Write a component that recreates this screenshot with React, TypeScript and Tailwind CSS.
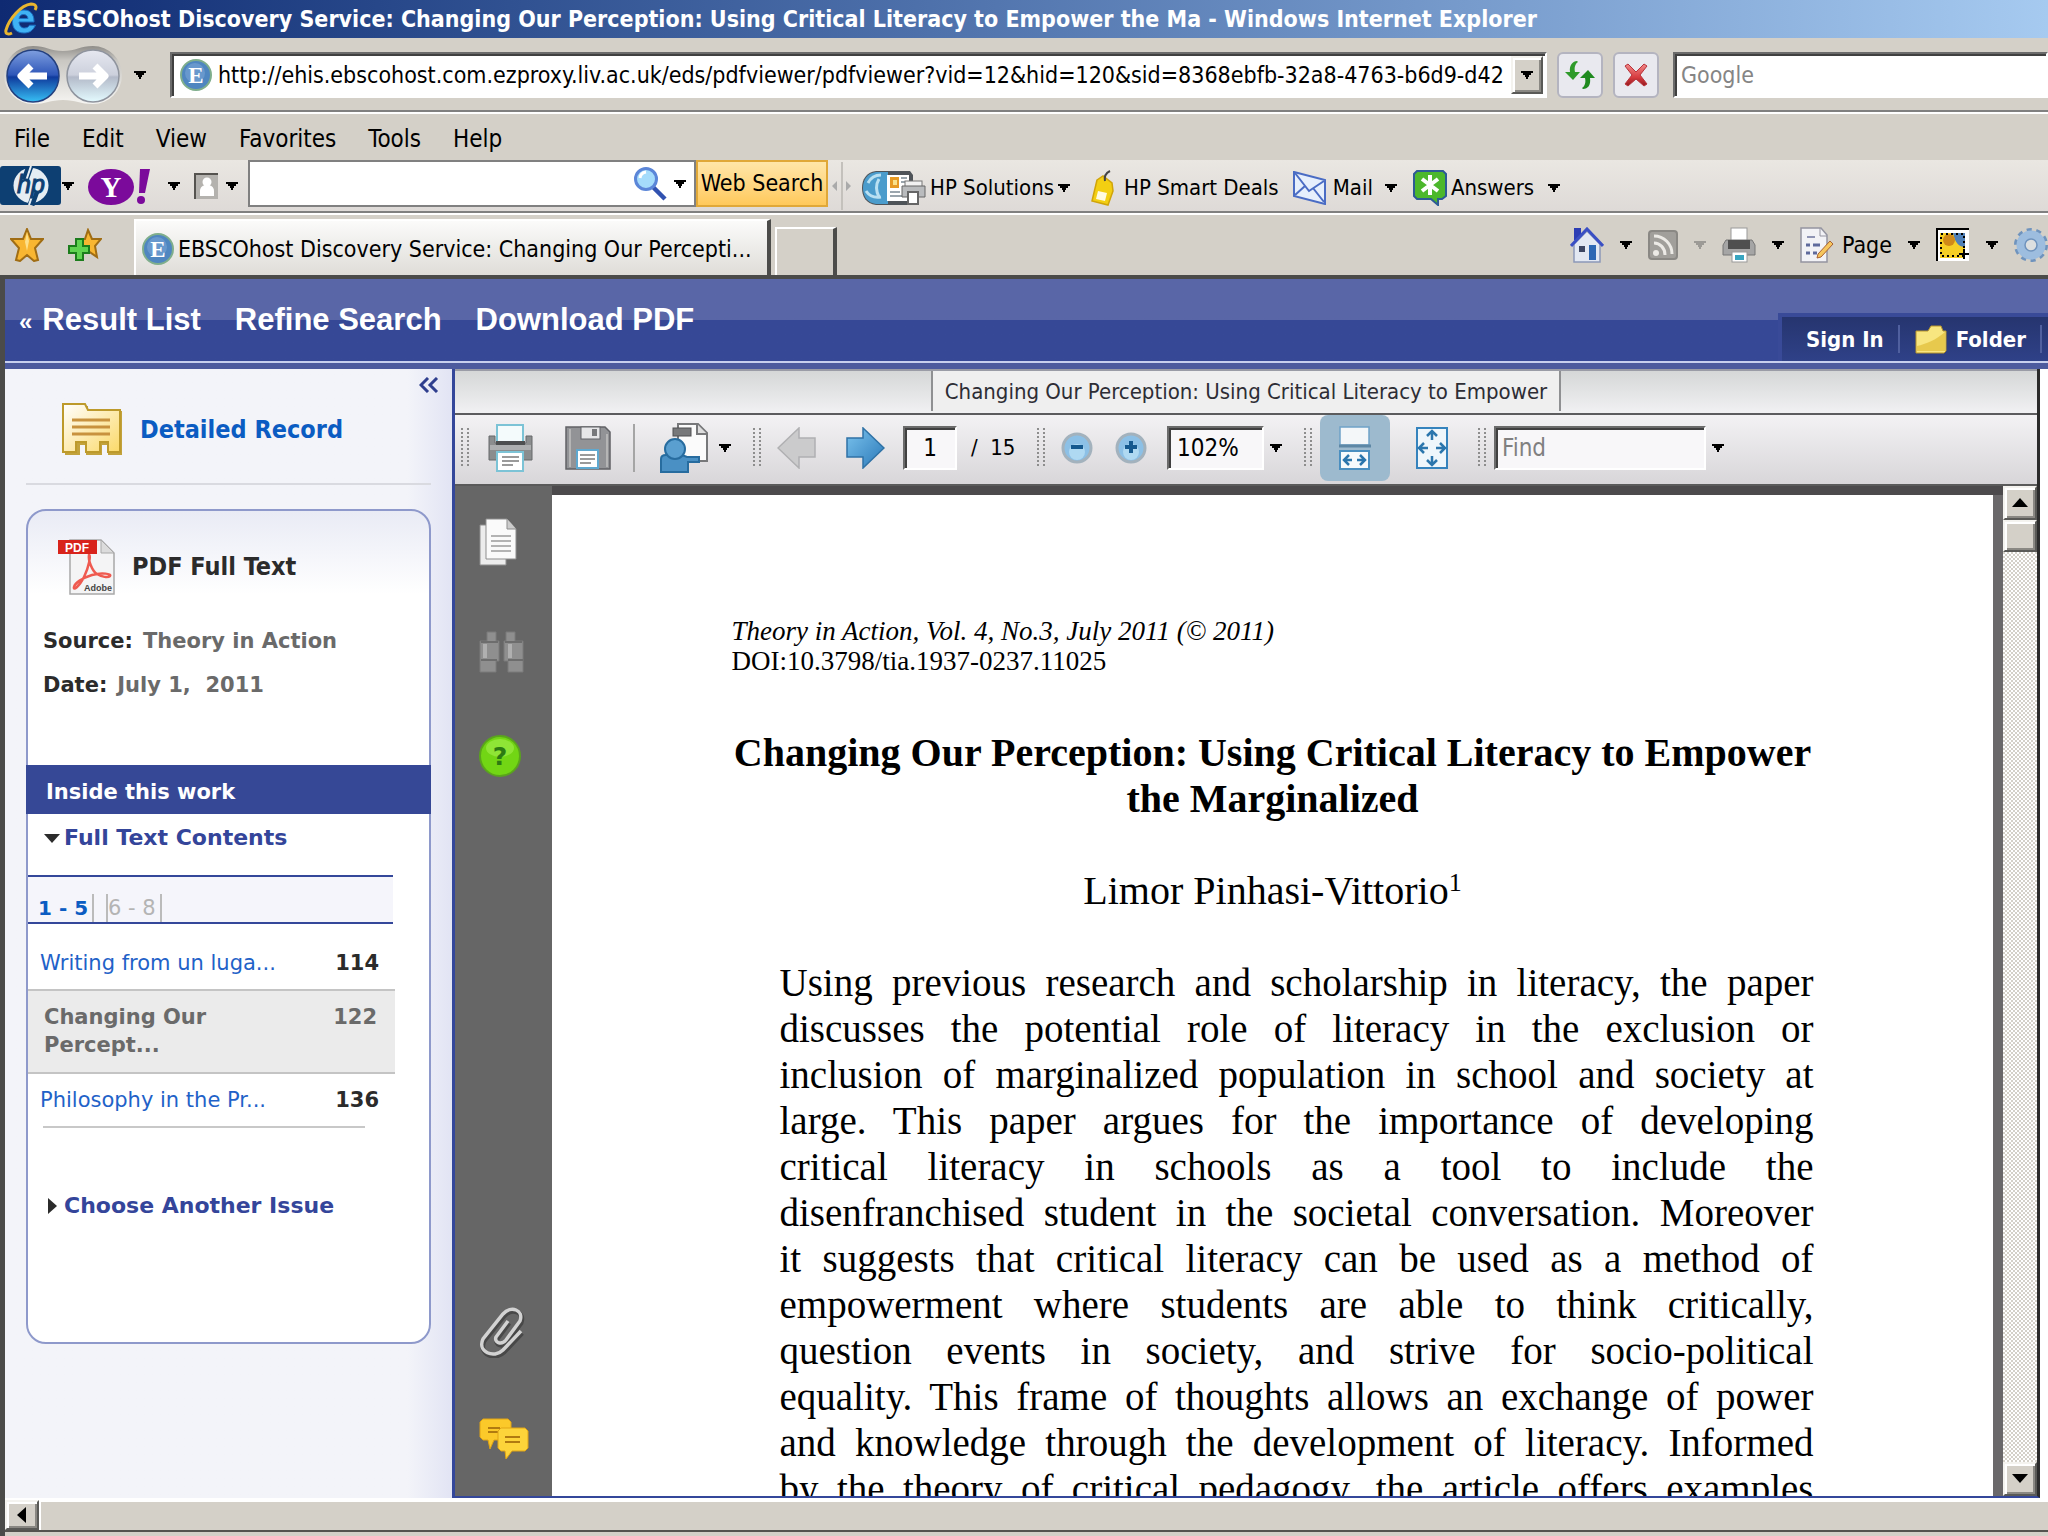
import type { ReactNode } from "react";

const uiFont = "font-['DejaVu_Sans_Condensed','DejaVu_Sans',sans-serif]";
const sunken =
  "border-2 border-t-[#6b6b6b] border-l-[#6b6b6b] border-r-white border-b-white shadow-[inset_2px_2px_0_#404040]";
const raised =
  "border-2 border-t-[#f4f3ef] border-l-[#f4f3ef] border-r-[#5a5a57] border-b-[#5a5a57] bg-[#d4d0c8] shadow-[inset_2px_2px_0_#ffffff,inset_-2px_-2px_0_#8a8883]";

const bodyLines = [
  "Using previous research and scholarship in literacy, the paper",
  "discusses the potential role of literacy in the exclusion or",
  "inclusion of marginalized population in school and society at",
  "large. This paper argues for the importance of developing",
  "critical literacy in schools as a tool to include the",
  "disenfranchised student in the societal conversation. Moreover",
  "it suggests that critical literacy can be used as a method of",
  "empowerment where students are able to think critically,",
  "question events in society, and strive for socio-political",
  "equality. This frame of thoughts allows an exchange of power",
  "and knowledge through the development of literacy. Informed",
  "by the theory of critical pedagogy, the article offers examples",
];

function Caret({ color = "#000" }: { color?: string }) {
  return (
    <svg width="12" height="8" viewBox="0 0 12 8" className="shrink-0" aria-hidden="true">
      <path d="M0 0H12V2H10V4H8V6H7V8H5V6H4V4H2V2H0Z" fill={color} />
    </svg>
  );
}

function CaretButton({ label, color }: { label: string; color?: string }) {
  return (
    <button aria-label={label} className="flex h-8 w-3 shrink-0 items-center justify-center">
      <Caret color={color} />
    </button>
  );
}

function Grip() {
  return (
    <svg width="8" height="40" viewBox="0 0 8 40" className="shrink-0" aria-hidden="true">
      <path d="M1 0V40M7 0V40" stroke="#8d8d8d" strokeWidth="2" strokeDasharray="2 2" />
    </svg>
  );
}

function IconButton({ label, children, className = "" }: { label: string; children: ReactNode; className?: string }) {
  return (
    <button aria-label={label} className={`flex shrink-0 items-center justify-center ${className}`}>
      {children}
    </button>
  );
}

/* ---------- Browser icons ---------- */

function IeLogo() {
  return (
    <svg width="34" height="36" viewBox="0 0 34 36" className="shrink-0" aria-hidden="true">
      <path
        d="M30 21H15c.3 4 2.500 6 5.500 6 2.500 0 4-1 5-2.800h6C29 29.500 25.500 32 20 32c-7 0-11.500-4-11.500-11S13 9 20 9c6.500 0 10 4.500 10 11zM15 17.500h9c-.4-2.600-2-4-4.500-4s-4 1.400-4.500 4z"
        fill="#3fb2f4"
        stroke="#1b6fc4"
      />
      <path d="M31 9c2-3 1-6-4-6C17 4 5 18 2 29c-1 4 2 5 6 3" fill="none" stroke="#e9b52f" strokeWidth="3" />
    </svg>
  );
}

function BackForward() {
  return (
    <svg width="118" height="58" viewBox="0 0 118 58" aria-hidden="true">
      <defs>
        <linearGradient id="back" x1="0" y1="0" x2="0" y2="1">
          <stop offset="0" stopColor="#7f9fe0" />
          <stop offset=".48" stopColor="#2e56b8" />
          <stop offset=".52" stopColor="#0f3a9c" />
          <stop offset="1" stopColor="#37c0f5" />
        </linearGradient>
        <linearGradient id="fwd" x1="0" y1="0" x2="0" y2="1">
          <stop offset="0" stopColor="#e6e8f0" />
          <stop offset=".48" stopColor="#ccd0dc" />
          <stop offset=".52" stopColor="#b3bac9" />
          <stop offset="1" stopColor="#e4fbff" />
        </linearGradient>
        <linearGradient id="tray" x1="0" y1="0" x2="0" y2="1">
          <stop offset="0" stopColor="#8f8d89" />
          <stop offset=".25" stopColor="#c9c7c2" />
          <stop offset="1" stopColor="#f6f5f2" />
        </linearGradient>
      </defs>
      <path d="M29 0C42 0 46 5 59 5S76 0 89 0a29 29 0 0 1 0 58C76 58 72 54 59 54S42 58 29 58A29 29 0 0 1 29 0Z" fill="url(#tray)" />
      <circle cx="29" cy="30" r="26" fill="url(#back)" stroke="#24407f" strokeWidth="1.500" />
      <circle cx="89" cy="30" r="26" fill="url(#fwd)" stroke="#8f949e" strokeWidth="1.500" />
      <path d="M27 20L17 30l10 10M18 30h25" fill="none" stroke="#fff" strokeWidth="7" strokeLinejoin="round" />
      <path d="M91 20l10 10-10 10M100 30H75" fill="none" stroke="#fff" strokeWidth="7" strokeLinejoin="round" />
    </svg>
  );
}

function EbscoIcon() {
  return (
    <svg width="32" height="34" viewBox="0 0 32 34" className="shrink-0" aria-hidden="true">
      <circle cx="16" cy="17" r="15" fill="#4f86c0" stroke="#7fae8c" strokeWidth="2" />
      <circle cx="15" cy="15" r="10" fill="#7aa5d6" opacity=".6" />
      <text x="16" y="25" textAnchor="middle" fontFamily="Liberation Serif, serif" fontWeight="bold" fontSize="23" fill="#fff">
        E
      </text>
    </svg>
  );
}

function RefreshIcon() {
  return (
    <svg width="32" height="32" viewBox="0 0 32 32" aria-hidden="true">
      <path d="M13 2C9 2 5 6 6 13H1l8 8 7-8h-5c-1-4 0-8 3-10z" fill="#2f9a2a" />
      <path d="M19 30c5 0 8-4 7-11h5l-7-8-8 8h5c1 4 0 8-3 10z" fill="#1f8a1f" />
    </svg>
  );
}

function StopIcon() {
  return (
    <svg width="26" height="26" viewBox="0 0 26 26" aria-hidden="true">
      <defs>
        <linearGradient id="stop" x1="0" y1="0" x2="0" y2="1">
          <stop offset="0" stopColor="#f08a8a" />
          <stop offset=".6" stopColor="#d83c40" />
          <stop offset="1" stopColor="#94191e" />
        </linearGradient>
      </defs>
      <path d="M2 4l3-2 8 8 8-8 3 2-7 9 7 9-3 2-8-7-8 7-3-2 7-9z" fill="url(#stop)" stroke="#b8323a" />
    </svg>
  );
}

function HpLogo() {
  return (
    <svg width="62" height="40" viewBox="0 0 62 40" aria-hidden="true">
      <rect width="61" height="39" rx="3" fill="#0d3f72" />
      <circle cx="31" cy="19.500" r="17.500" fill="#e6edf3" />
      <path d="M30 0l-5 14M31 39l5-14" stroke="#0d3f72" strokeWidth="7" />
      <path d="M31 0l-9 27M29 39l9-26" stroke="#e6edf3" strokeWidth="2" />
      <text x="31" y="27" textAnchor="middle" fontFamily="Liberation Sans, sans-serif" fontStyle="italic" fontSize="25" fill="#0d3f72" stroke="#0d3f72">
        hp
      </text>
    </svg>
  );
}

function YahooLogo() {
  return (
    <svg width="64" height="40" viewBox="0 0 64 40" aria-hidden="true">
      <ellipse cx="23" cy="21" rx="23" ry="18" fill="#7b0a9b" />
      <text x="23" y="31" textAnchor="middle" fontFamily="Liberation Serif, serif" fontWeight="bold" fontSize="29" fill="#fff">
        Y
      </text>
      <path d="M52 3h10l-5 24h-6z" fill="#7b0a9b" />
      <ellipse cx="53" cy="34" rx="4" ry="4" fill="#7b0a9b" />
    </svg>
  );
}

function PersonIcon() {
  return (
    <svg width="24" height="26" viewBox="0 0 24 26" aria-hidden="true">
      <rect width="24" height="26" fill="#b4b2ae" />
      <path d="M1 26V1h23" fill="none" stroke="#55534f" strokeWidth="2" />
      <circle cx="13" cy="9" r="4.500" fill="#fff" />
      <path d="M6 23v-5c0-4 3-6 7-6s7 2 7 6v5z" fill="#fff" />
    </svg>
  );
}

function Magnifier() {
  return (
    <svg width="34" height="34" viewBox="0 0 34 34" aria-hidden="true">
      <path d="M19 20l12 12" stroke="#3152b0" strokeWidth="4.500" />
      <circle cx="12" cy="12" r="10.500" fill="#a5dcfb" stroke="#5b86d8" strokeWidth="3" />
      <path d="M6 11a7 7 0 0 1 6-6" stroke="#fff" strokeWidth="3" fill="none" />
    </svg>
  );
}

function HpSolutionsIcon() {
  return (
    <svg width="64" height="36" viewBox="0 0 64 36" aria-hidden="true">
      <path d="M14 1h34l3 4v26l-3 4H14C4 34 0 26 0 18S4 2 14 1z" fill="#4f5459" />
      <path d="M14 2h12v32H14C5 33 1 26 1 18S5 3 14 2z" fill="#4b9ccc" />
      <path d="M6 13c3-6 8-8 13-8M4 21c4 6 9 7 15 6M17 9c-3 5-3 12 0 18" stroke="#b9e0f2" strokeWidth="3" fill="none" />
      <rect x="25" y="5" width="22" height="26" fill="#fff" />
      <rect x="28" y="7" width="9" height="11" fill="#e69a24" />
      <rect x="31" y="10" width="4" height="5" fill="#f8e08a" />
      <path d="M39 8h6M39 12h6M28 22h10M28 26h12" stroke="#9aa5ad" strokeWidth="2" />
      <rect x="43" y="11" width="17" height="7" fill="#f2f2f2" stroke="#777" />
      <path d="M40 16h23v11H40z" fill="#b9bbbd" stroke="#666" />
      <rect x="46" y="22" width="10" height="12" fill="#fff" stroke="#666" strokeWidth="2" />
    </svg>
  );
}

function TagIcon() {
  return (
    <svg width="26" height="36" viewBox="0 0 26 36" aria-hidden="true">
      <path d="M7 10l6-4 9 7 1 8-5 14L2 31z" fill="#f3cf12" stroke="#d0a40a" strokeWidth="1.500" />
      <path d="M8 21l9 2-2 8-9-2z" fill="#fffbe0" />
      <path d="M15 11c-1-5 1-8 5-10" fill="none" stroke="#444" strokeWidth="2" />
    </svg>
  );
}

function MailIcon() {
  return (
    <svg width="34" height="34" viewBox="0 0 34 34" aria-hidden="true">
      <path d="M1 1l31 8v24L1 25z" fill="#e6effc" stroke="#4a6cc4" strokeWidth="2" />
      <path d="M2 2l14 18L31 10M2 24l10-9M31 31L20 17" fill="none" stroke="#4a6cc4" strokeWidth="2" />
    </svg>
  );
}

function AnswersIcon() {
  return (
    <svg width="34" height="36" viewBox="0 0 34 36" aria-hidden="true">
      <path d="M4 1h26l3 3v22l-4 3h-4v6l-7-6H4l-3-3V4z" fill="#4cb82c" stroke="#2d5b94" strokeWidth="2" />
      <path d="M17 5v20M9 9l16 12M25 9L9 21" stroke="#fff" strokeWidth="4" />
    </svg>
  );
}

function StarIcon() {
  return (
    <svg width="34" height="34" viewBox="0 0 34 34" aria-hidden="true">
      <path d="M17 1l4 10h12l-8 9 3 12-4 1-7-6-7 6-4-1 3-12-8-9h12z" fill="#f8b631" stroke="#a06d14" strokeWidth="2" />
      <path d="M17 4l2 9-2 10-2-9z" fill="#fde08a" />
    </svg>
  );
}

function AddStarIcon() {
  return (
    <svg width="34" height="34" viewBox="0 0 34 34" aria-hidden="true">
      <path d="M20 2l4 9h9l-6 7 2 11-9-6-8 4 1-9-4-7h8z" fill="#f8b631" stroke="#a06d14" strokeWidth="2" />
      <path d="M8 11h7v7h6v7h-6v7H8v-7H1v-7h7z" fill="#5fd350" stroke="#1c7d1c" strokeWidth="2" />
    </svg>
  );
}

function HomeIcon() {
  return (
    <svg width="34" height="36" viewBox="0 0 34 36" aria-hidden="true">
      <rect x="4" y="1" width="7" height="12" fill="#2c3db4" />
      <path d="M4 17L17 4l13 13v18H4z" fill="#e3e8f2" stroke="#8c98b8" strokeWidth="1.500" />
      <path d="M1 19L17 2l16 17" fill="none" stroke="#3a4fc4" strokeWidth="3" />
      <rect x="9" y="19" width="6" height="6" fill="#3d4662" />
      <rect x="19" y="18" width="7" height="15" fill="#2d67b4" />
    </svg>
  );
}

function RssIcon() {
  return (
    <svg width="30" height="30" viewBox="0 0 30 30" aria-hidden="true">
      <rect x="1" y="1" width="28" height="28" rx="3" fill="#a19f9b" stroke="#8a8884" strokeWidth="2" />
      <circle cx="8" cy="23" r="3" fill="#eceae6" />
      <path d="M6 13c6 0 11 5 11 12M6 6c10 0 18 8 18 18" fill="none" stroke="#eceae6" strokeWidth="3" />
    </svg>
  );
}

function SmallPrinter() {
  return (
    <svg width="34" height="36" viewBox="0 0 34 36" aria-hidden="true">
      <rect x="9" y="1" width="16" height="13" fill="#fff" stroke="#999" />
      <path d="M4 13h26l3 5v10H1V18z" fill="#a5a5a5" stroke="#777" />
      <rect x="6" y="13" width="22" height="9" fill="#4f4f4f" />
      <rect x="10" y="25" width="15" height="10" fill="#fff" stroke="#999" />
      <path d="M13 28h9v5h-9z" fill="#39a5c0" />
    </svg>
  );
}

function PageIcon() {
  return (
    <svg width="34" height="36" viewBox="0 0 34 36" aria-hidden="true">
      <path d="M1 1h20l6 7v27H1z" fill="#f2f2f6" stroke="#9494a0" strokeWidth="1.500" />
      <path d="M20 1v8h7" fill="none" stroke="#9494a0" />
      <path d="M7 10h8" stroke="#8f94b4" strokeWidth="2" />
      <path d="M6 18h4M13 18h7M6 26h4M13 26h4" stroke="#5f6a9c" strokeWidth="3" />
      <path d="M30 14l3 3-12 13-4 1 1-4z" fill="#f6c65e" stroke="#a86030" />
    </svg>
  );
}

function ClipArtIcon() {
  return (
    <svg width="34" height="34" viewBox="0 0 34 34" aria-hidden="true">
      <path d="M1 1h32v32H1z" fill="#fff" />
      <path d="M1 33V1h32" fill="none" stroke="#000" strokeWidth="2" />
      <rect x="4" y="5" width="25" height="25" fill="#f6cf25" />
      <path d="M17 5h12v14c-6 0-10-4-12-14z" fill="#4f80b8" />
      <circle cx="13" cy="12" r="6" fill="#d08a18" />
      <rect x="5" y="6" width="23" height="22" fill="none" stroke="#000" strokeWidth="2" strokeDasharray="2 3" />
      <path d="M28 21v10M23 26h10" stroke="#000" strokeWidth="2" />
    </svg>
  );
}

function GearIcon() {
  return (
    <svg width="34" height="36" viewBox="0 0 34 36" className="shrink-0" aria-hidden="true">
      <circle cx="17" cy="18" r="15" fill="none" stroke="#6f93bd" strokeWidth="4" strokeDasharray="5 4.425" />
      <circle cx="17" cy="18" r="10" fill="none" stroke="#9dbddf" strokeWidth="9" />
      <circle cx="17" cy="18" r="6" fill="#dcdfe0" stroke="#6f93bd" strokeWidth="1.500" />
    </svg>
  );
}

/* ---------- Page icons ---------- */

function FolderIcon() {
  return (
    <svg width="34" height="30" viewBox="0 0 34 30" aria-hidden="true">
      <path d="M2 7h12l3-5h10l2 5h3v20l-2 2H2z" fill="#f8e680" stroke="#b8962a" />
      <path d="M3 22C12 20 22 16 31 8v19H3z" fill="#dcb62c" opacity=".6" />
    </svg>
  );
}

function RecordIcon() {
  return (
    <svg width="62" height="54" viewBox="0 0 62 54" className="shrink-0" aria-hidden="true">
      <defs>
        <linearGradient id="rec" x1="0" y1="0" x2="1" y2="1">
          <stop offset="0" stopColor="#fff" />
          <stop offset="1" stopColor="#fbd968" />
        </linearGradient>
      </defs>
      <path d="M3 3h23v5h34v44H46V42h-6v10H24V42h-6v10H3z" fill="#c2a23c" />
      <path d="M1 1h22l3 6h32v42H46V39h-8v10H24V39H14v10H1z" fill="url(#rec)" stroke="#bd9a2b" strokeWidth="2" />
      <path d="M10 17h38M10 24h38M10 31h38" stroke="#c8923e" strokeWidth="3" />
    </svg>
  );
}

function PdfIcon() {
  return (
    <svg width="58" height="56" viewBox="0 0 58 56" className="shrink-0" aria-hidden="true">
      <path d="M12 1h31l13 13v41H12z" fill="#f4f4f5" stroke="#a8a8a8" strokeWidth="1.500" />
      <path d="M43 1v13h13z" fill="#dcdcdc" stroke="#a8a8a8" />
      <path d="M31 16c-1 5 3 16 8 19s11 4 13 2-8-4-18-1-17 8-18 12 5 0 10-10 7-22 5-22z" fill="none" stroke="#ef5a50" strokeWidth="2.500" />
      <rect y="1" width="39" height="14" fill="#d8231b" />
      <text x="19" y="13" textAnchor="middle" fontFamily="Liberation Sans, sans-serif" fontWeight="bold" fontSize="12" fill="#fff">
        PDF
      </text>
      <text x="54" y="52" textAnchor="end" fontFamily="Liberation Sans, sans-serif" fontWeight="bold" fontSize="9" fill="#444">
        Adobe
      </text>
    </svg>
  );
}

/* ---------- Viewer icons ---------- */

function PrinterIcon() {
  return (
    <svg width="48" height="50" viewBox="0 0 48 50" aria-hidden="true">
      <path d="M2 13h6v7h31v-7h6v24H2z" fill="#8b8d8e" stroke="#66686a" />
      <path d="M3 22h41v5H3z" fill="#adafb0" />
      <rect x="10" y="2" width="26" height="17" fill="#f4fbfc" stroke="#7cc3d6" strokeWidth="2" />
      <rect x="9" y="18" width="29" height="4" fill="#4d4f50" />
      <rect x="10" y="29" width="26" height="19" fill="#fff" stroke="#7cc3d6" strokeWidth="2" />
      <path d="M15 34h17M15 38h17M15 42h11" stroke="#9a9a9a" strokeWidth="2" />
    </svg>
  );
}

function SaveIcon() {
  return (
    <svg width="46" height="44" viewBox="0 0 46 44" aria-hidden="true">
      <path d="M1 1h39l5 5v37H1z" fill="#929396" stroke="#616266" strokeWidth="1.500" />
      <path d="M5 3v38M42 8v33" stroke="#b5b5b5" strokeWidth="2" />
      <rect x="16" y="1" width="19" height="12" fill="#e6e6e8" stroke="#616266" />
      <rect x="27" y="3" width="5" height="7" fill="#77787b" />
      <rect x="12" y="24" width="21" height="18" fill="#fff" stroke="#5fa8cf" strokeWidth="2" />
      <path d="M15 29h15M15 33h15M15 37h11" stroke="#9a9a9a" strokeWidth="2" />
    </svg>
  );
}

function CollaborateIcon() {
  return (
    <svg width="50" height="50" viewBox="0 0 50 50" aria-hidden="true">
      <path d="M19 1h20l9 9v28H19z" fill="#fbfbfb" stroke="#77787a" strokeWidth="2" />
      <path d="M38 1v10h10" fill="#ddd" stroke="#77787a" strokeWidth="2" />
      <rect x="14" y="5" width="18" height="8" fill="#77787a" stroke="#505153" />
      <path d="M2 49V36c0-3 2-4 5-4h16l5 2h12v5H29v10z" fill="#4a90c4" stroke="#276c9f" strokeWidth="2" />
      <circle cx="16" cy="26" r="10" fill="#5a9fd0" stroke="#276c9f" strokeWidth="2" />
    </svg>
  );
}

function PrevArrow() {
  return (
    <svg width="40" height="42" viewBox="0 0 40 42" aria-hidden="true">
      <path d="M1 21L22 1v10h16v19H22v11z" fill="#cbcbcc" stroke="#b0b0b2" strokeWidth="1.500" />
    </svg>
  );
}

function NextArrow() {
  return (
    <svg width="40" height="42" viewBox="0 0 40 42" aria-hidden="true">
      <defs>
        <linearGradient id="next" x1="0" y1="0" x2="1" y2="1">
          <stop offset="0" stopColor="#7cc4ee" />
          <stop offset="1" stopColor="#2a78b8" />
        </linearGradient>
      </defs>
      <path d="M39 21L18 1v10H2v19h16v11z" fill="url(#next)" stroke="#2f72a6" strokeWidth="1.500" />
    </svg>
  );
}

function ZoomIcon({ plus }: { plus?: boolean }) {
  return (
    <svg width="32" height="32" viewBox="0 0 32 32" aria-hidden="true">
      <circle cx="16" cy="16" r="14" fill="#8cc0e6" stroke="#a3b2bd" strokeWidth="3" />
      <circle cx="16" cy="20" r="8" fill="#b8dff5" opacity=".8" />
      <path d={plus ? "M10 15h12M16 9v12" : "M10 15h12"} stroke="#15598f" strokeWidth="4" />
    </svg>
  );
}

function FitWidthIcon() {
  return (
    <svg width="34" height="44" viewBox="0 0 34 44" aria-hidden="true">
      <rect x="2" y="1" width="29" height="18" fill="#f4f7f9" stroke="#6fa3c8" strokeWidth="1.500" />
      <path d="M1 20h32" stroke="#5d87a5" strokeWidth="3" />
      <rect x="2" y="25" width="29" height="18" fill="#f6fafc" stroke="#4a8fc0" strokeWidth="2" />
      <path d="M11 29l-5 5 5 5M22 29l5 5-5 5M7 34h7M19 34h7" stroke="#2b76ad" strokeWidth="2.500" fill="none" />
    </svg>
  );
}

function FitPageIcon() {
  return (
    <svg width="34" height="44" viewBox="0 0 34 44" aria-hidden="true">
      <rect x="2" y="2" width="30" height="40" fill="#eef6fb" stroke="#3583bd" strokeWidth="2" />
      <path
        d="M12 10l5-5 5 5M17 6v8M12 34l5 5 5-5M17 38v-8M9 17l-5 5 5 5M5 22h8M25 17l5 5-5 5M29 22h-8"
        stroke="#2b76ad"
        strokeWidth="2.500"
        fill="none"
      />
    </svg>
  );
}

function PagesIcon() {
  return (
    <svg width="40" height="48" viewBox="0 0 40 48" aria-hidden="true">
      <path d="M1 7h26v40H1z" fill="#ececec" stroke="#8d8d8d" />
      <path d="M7 1h21l9 10v30H7z" fill="#fafafa" stroke="#8d8d8d" />
      <path d="M28 1v10h9" fill="#ccc" stroke="#8d8d8d" />
      <path d="M12 18h20M12 23h20M12 28h20M12 33h20" stroke="#b3b3b3" strokeWidth="2" />
    </svg>
  );
}

function BinocularsIcon() {
  return (
    <svg width="46" height="44" viewBox="0 0 46 44" aria-hidden="true">
      <path d="M8 2h9v9h3v20h-3v11H1V11h7zM27 2h9v9h8v31H29V31h-4V11h2z" fill="#8f8f8f" stroke="#7a7a7a" />
      <path d="M2 12h17M26 12h17M2 30h16M29 30h15" stroke="#6d6d6d" strokeWidth="2" />
      <path d="M6 14v14M31 14v14" stroke="#b0b0b0" strokeWidth="4" />
    </svg>
  );
}

function HelpIcon() {
  return (
    <svg width="42" height="44" viewBox="0 0 42 44" aria-hidden="true">
      <circle cx="21" cy="22" r="20" fill="#72d614" stroke="#5aa51c" strokeWidth="2" />
      <ellipse cx="21" cy="14" rx="14" ry="9" fill="#a4ee4c" opacity=".6" />
      <text x="21" y="31" textAnchor="middle" fontFamily="DejaVu Sans, sans-serif" fontWeight="bold" fontSize="25" fill="#2c7a12">
        ?
      </text>
    </svg>
  );
}

function PaperclipIcon() {
  const clip = "M42 25L24 44c-9 9-26 2-20-11L24 8c8-9 21-4 17 7L27 34c-5 6-12 2-10-3l12-16";
  return (
    <svg width="46" height="52" viewBox="0 0 46 52" aria-hidden="true">
      <path d={clip} fill="none" stroke="#484848" strokeWidth="5" transform="translate(1 2)" />
      <path d={clip} fill="none" stroke="#d2d2d2" strokeWidth="3.500" />
    </svg>
  );
}

function CommentsIcon() {
  return (
    <svg width="50" height="42" viewBox="0 0 50 42" aria-hidden="true">
      <path d="M4 1h25l3 3v15l-3 3H15l-4 9-2-9H4l-3-3V4z" fill="#fbc92a" stroke="#e0a414" />
      <path d="M9 10h12M9 14h10" stroke="#b07a10" strokeWidth="2" />
      <path d="M22 10h24l3 3v17l-3 3H33l-6 8-1-8h-4l-3-3V13z" fill="#fdd43a" stroke="#e0a414" />
      <path d="M26 19h15M26 24h15" stroke="#b07a10" strokeWidth="2" />
    </svg>
  );
}

/* ---------- Browser chrome ---------- */

function AddressBar() {
  return (
    <div className="flex h-[74px] shrink-0 items-center border-b-2 border-[#808080] pt-0.5 pl-1">
      <IconButton label="Back and forward">
        <BackForward />
      </IconButton>
      <div className="mr-6 ml-3">
        <CaretButton label="Recent pages" />
      </div>
      <div className={`flex h-[46px] min-w-0 flex-1 items-center gap-1.5 bg-white pr-0.5 pl-2 ${sunken}`}>
        <EbscoIcon />
        <input
          aria-label="Address"
          className="min-w-0 flex-1 bg-transparent text-[23px] outline-none"
          defaultValue="http://ehis.ebscohost.com.ezproxy.liv.ac.uk/eds/pdfviewer/pdfviewer?vid=12&hid=120&sid=8368ebfb-32a8-4763-b6d9-d42"
        />
        <button aria-label="Show address list" className={`flex h-[38px] w-8 items-center justify-center ${raised}`}>
          <Caret />
        </button>
      </div>
      <div className="mx-2.5 flex gap-2.5">
        <IconButton label="Refresh" className="h-[46px] w-[46px] rounded-md border-2 border-[#b4b4c0] bg-[#e9e9ef]">
          <RefreshIcon />
        </IconButton>
        <IconButton label="Stop" className="h-[46px] w-[46px] rounded-md border-2 border-[#b4b4c0] bg-[#e9e9ef]">
          <StopIcon />
        </IconButton>
      </div>
      <input
        aria-label="Search"
        placeholder="Google"
        className={`ml-1 h-[46px] w-[375px] bg-white px-1.5 text-[23px] outline-none placeholder:text-[#858585] ${sunken}`}
      />
    </div>
  );
}

function MenuBar() {
  return (
    <nav className="flex h-12 shrink-0 items-center gap-8 border-t-2 border-white px-3.5 pt-1 text-[24px]">
      {["File", "Edit", "View", "Favorites", "Tools", "Help"].map((item) => (
        <button key={item}>{item}</button>
      ))}
    </nav>
  );
}

function PartnerToolbar() {
  return (
    <div className="flex h-[53px] shrink-0 items-center border-b-2 border-[#808080] bg-linear-to-b from-[#eae7e2] to-[#dedad7] text-[22px]">
      <IconButton label="HP">
        <HpLogo />
      </IconButton>
      <CaretButton label="HP menu" />
      <IconButton label="Yahoo!" className="mr-4 ml-3.5">
        <YahooLogo />
      </IconButton>
      <CaretButton label="Yahoo! menu" />
      <IconButton label="Account" className="mr-2 ml-3.5">
        <PersonIcon />
      </IconButton>
      <CaretButton label="Account menu" />
      <div className="ml-2.5 flex h-[47px] w-[448px] shrink-0 items-center gap-1.5 self-start border-2 border-[#808080] bg-white pr-2">
        <input aria-label="Web search" className="min-w-0 flex-1 bg-transparent px-2 outline-none" />
        <Magnifier />
        <CaretButton label="Search options" />
      </div>
      <button className="h-[47px] w-[132px] shrink-0 self-start border-2 border-[#e0a838] bg-linear-to-b from-[#ffe6a8] to-[#ffc95a] text-[23px] whitespace-nowrap">
        Web Search
      </button>
      <svg width="20" height="48" viewBox="0 0 20 48" className="mx-1 shrink-0" aria-hidden="true">
        <path d="M5 19v10l-5-5zM14 19v10l5-5z" fill="#aaa" />
        <path d="M10 0v48" stroke="#c4c1bc" strokeWidth="2" />
      </svg>
      <div className="ml-1.5 flex shrink-0 items-center pt-1 whitespace-nowrap">
        <button className="flex items-center gap-1">
          <HpSolutionsIcon />
          HP Solutions
          <Caret />
        </button>
        <button className="ml-5 flex items-center gap-2">
          <TagIcon />
          HP Smart Deals
        </button>
        <button className="ml-3.5 flex items-center gap-1.5">
          <MailIcon />
          Mail
          <span className="ml-1.5">
            <Caret />
          </span>
        </button>
        <button className="ml-4 flex items-center gap-1">
          <AnswersIcon />
          Answers
          <span className="ml-2.5">
            <Caret />
          </span>
        </button>
      </div>
    </div>
  );
}

function TabRow() {
  return (
    <div className="flex h-[62px] shrink-0 items-end border-t-2 border-white">
      <div className="flex items-center gap-6 self-center pl-2.5">
        <IconButton label="Favorites Center">
          <StarIcon />
        </IconButton>
        <IconButton label="Add to Favorites">
          <AddStarIcon />
        </IconButton>
      </div>
      <button className="ml-8 flex h-14 w-[637px] items-center gap-1 overflow-hidden border-t-2 border-r-4 border-l-2 border-t-white border-r-[#4c4c4a] border-l-white bg-linear-to-b from-[#fbfbfa] to-[#dfddd8] pt-0.5 pl-1.5 text-[23px] whitespace-nowrap">
        <EbscoIcon />
        EBSCOhost Discovery Service: Changing Our Percepti...
      </button>
      <button
        aria-label="New tab"
        className="ml-1 h-12 w-[62px] border-t-2 border-r-4 border-l-2 border-t-white border-r-[#4c4c4a] border-l-white"
      />
      <div className="ml-auto flex shrink-0 items-center gap-4 self-center text-[23px]">
        <IconButton label="Home">
          <HomeIcon />
        </IconButton>
        <CaretButton label="Home menu" />
        <IconButton label="Feeds">
          <RssIcon />
        </IconButton>
        <CaretButton label="Feeds menu" color="#9c9a96" />
        <IconButton label="Print page">
          <SmallPrinter />
        </IconButton>
        <CaretButton label="Print menu" />
        <button className="flex items-center gap-2">
          <PageIcon />
          Page
        </button>
        <CaretButton label="Page menu" />
        <IconButton label="Clip">
          <ClipArtIcon />
        </IconButton>
        <CaretButton label="Clip menu" />
        <IconButton label="Tools">
          <GearIcon />
        </IconButton>
      </div>
    </div>
  );
}

/* ---------- EBSCO page ---------- */

function SiteHeader() {
  return (
    <header className="shrink-0">
      <div className="flex h-[82px] items-center bg-linear-to-b from-[#5966a7] from-50% to-[#364896] to-50% font-['Liberation_Sans',sans-serif] text-[31px] font-bold whitespace-nowrap text-white">
        <a href="#results" className="ml-3.5 flex items-baseline gap-2.5">
          <span className="text-2xl">«</span>
          Result List
        </a>
        <a href="#refine" className="ml-[34px]">
          Refine Search
        </a>
        <a href="#download" className="ml-[34px]">
          Download PDF
        </a>
        <div
          className={`ml-auto flex h-12 items-center self-end border-t-4 border-l-4 border-[#394a98] bg-linear-to-b from-[#26356f] to-[#2f4188] text-[22px] ${uiFont}`}
        >
          <a href="#signin" className="pr-3.5 pl-6">
            Sign In
          </a>
          <a href="#folder" className="flex h-7 items-center gap-2 border-x-2 border-[#50609f] px-3.5">
            <FolderIcon />
            Folder
          </a>
          <span className="w-1.5" />
        </div>
      </div>
      <div className="h-2 border-t-2 border-[#c8d0ee] bg-[#4d5b9e]" />
    </header>
  );
}

function SideBar() {
  return (
    <aside className="flex w-[450px] shrink-0 flex-col border-r-3 border-[#34479a] bg-linear-to-r from-[#f3f4f9] from-90% to-[#e2e4f4] px-[21px] font-['DejaVu_Sans',sans-serif] text-[21px] leading-7">
      <div className="flex h-6 shrink-0 items-end justify-end">
        <button aria-label="Collapse panel" className="-mr-2 flex">
          <svg width="20" height="16" viewBox="0 0 20 16" aria-hidden="true">
            <path d="M9 1L2 8l7 7M18 1l-7 7 7 7" fill="none" stroke="#2f3f8e" strokeWidth="3" />
          </svg>
        </button>
      </div>
      <a
        href="#record"
        className={`flex h-[92px] shrink-0 items-center gap-4 border-b-2 border-[#d9dae0] pb-4 pl-9 text-[25px] font-bold whitespace-nowrap text-[#0b5cc2] ${uiFont}`}
      >
        <RecordIcon />
        Detailed Record
      </a>
      <section className="mt-6 h-[835px] shrink-0 rounded-[20px] border-2 border-[#8e99cb] bg-linear-to-b from-[#e9ebf5] to-white to-10%">
        <div className={`flex h-[104px] items-center gap-4 pt-2 pl-[30px] text-[25px] font-bold text-[#2b2b2b] ${uiFont}`}>
          <PdfIcon />
          PDF Full Text
        </div>
        <dl className="flex h-[150px] flex-col gap-4 pt-3 pl-[15px] font-bold whitespace-nowrap text-[#2b2b2b]">
          <div className="flex gap-2.5">
            <dt>Source:</dt>
            <dd className="text-[#6a6a6a]">Theory in Action</dd>
          </div>
          <div className="flex gap-2.5">
            <dt>Date:</dt>
            <dd className="whitespace-pre text-[#6a6a6a]">July 1,  2011</dd>
          </div>
        </dl>
        <h2 className="-mx-0.5 flex h-[49px] items-center bg-[#364896] pt-1 pl-5 font-bold text-white">
          Inside this work
        </h2>
        <button className="flex h-[61px] items-start gap-1 pt-2.5 pl-4 text-[22px] font-bold whitespace-nowrap text-[#34459a]">
          <svg width="16" height="28" viewBox="0 0 16 28" aria-hidden="true">
            <path d="M0 10h16l-8 9z" fill="#2b2b2b" />
          </svg>
          Full Text Contents
        </button>
        <div className="mr-9 flex h-[49px] items-end gap-3 border-y-2 border-[#34479a] bg-[#f5f5fb] pl-2.5">
          <a href="#p1" className="border-r-2 border-[#bbb] pr-1 text-[20px] font-bold text-[#0b5cc2]">
            1 - 5
          </a>
          <a href="#p2" className="border-x-2 border-[#bbb] pr-1 text-[#b4b4b4]">
            6 - 8
          </a>
        </div>
        <table className="w-[367px] table-fixed text-left whitespace-nowrap">
          <tbody>
            <tr className="h-[66px]">
              <td className="w-[290px] pt-3 pl-3 text-[#1f62c8]">
                <a href="#114">Writing from un luga...</a>
              </td>
              <td className="pt-3 pr-4 text-right font-bold text-[#2b2b2b]">114</td>
            </tr>
            <tr className="h-[83px] border-y-2 border-[#c4c4c4] bg-[#ebebeb] align-top font-bold text-[#6a6a6a]">
              <td className="pt-3 pl-4">
                Changing Our
                <br />
                Percept...
              </td>
              <td className="pt-3 pr-[18px] text-right">122</td>
            </tr>
            <tr className="h-[53px]">
              <td className="pl-3 text-[#1f62c8]">
                <a href="#136">Philosophy in the Pr...</a>
              </td>
              <td className="pr-4 text-right font-bold text-[#2b2b2b]">136</td>
            </tr>
          </tbody>
        </table>
        <div className="mr-16 ml-[15px] border-t-2 border-[#c8c8c8]" />
        <button className="mt-16 flex items-center gap-1.5 pl-5 text-[22px] font-bold whitespace-nowrap text-[#34459a]">
          <svg width="10" height="16" viewBox="0 0 10 16" aria-hidden="true">
            <path d="M0 0v16l9-8z" fill="#2b2b2b" />
          </svg>
          Choose Another Issue
        </button>
      </section>
    </aside>
  );
}

function ViewerToolbar() {
  const field = `h-11 bg-[#f8f7f9] text-[24px] outline-none ${sunken}`;
  return (
    <div className="flex h-[71px] shrink-0 items-center border-b-2 border-[#5a5a5a] bg-linear-to-b from-[#f3f2f4] to-[#d8d6d9] pb-1 pl-1.5 text-[22px]">
      <Grip />
      <IconButton label="Print" className="ml-[18px]">
        <PrinterIcon />
      </IconButton>
      <IconButton label="Save a copy" className="ml-[30px]">
        <SaveIcon />
      </IconButton>
      <span className="ml-[22px] h-12 w-0.5 bg-[#a5a5a5]" />
      <IconButton label="Collaborate" className="mr-2.5 ml-6">
        <CollaborateIcon />
      </IconButton>
      <CaretButton label="Collaborate menu" />
      <span className="ml-[22px]">
        <Grip />
      </span>
      <IconButton label="Previous page" className="ml-4">
        <PrevArrow />
      </IconButton>
      <IconButton label="Next page" className="ml-7">
        <NextArrow />
      </IconButton>
      <input aria-label="Page number" defaultValue="1" className={`ml-[18px] w-[54px] text-center ${field}`} />
      <span className="ml-3.5 w-[66px] whitespace-pre">/  15</span>
      <Grip />
      <IconButton label="Zoom out" className="ml-4">
        <ZoomIcon />
      </IconButton>
      <IconButton label="Zoom in" className="ml-[22px]">
        <ZoomIcon plus />
      </IconButton>
      <input aria-label="Zoom level" defaultValue="102%" className={`mr-1.5 ml-5 w-[97px] pl-2 ${field}`} />
      <CaretButton label="Zoom levels" />
      <span className="ml-[22px]">
        <Grip />
      </span>
      <IconButton label="Fit width" className="ml-2 h-[66px] w-[70px] rounded-lg bg-[#9dbace]">
        <FitWidthIcon />
      </IconButton>
      <IconButton label="Fit page" className="mx-[25px]">
        <FitPageIcon />
      </IconButton>
      <span className="mx-1">
        <Grip />
      </span>
      <input
        aria-label="Find"
        placeholder="Find"
        className={`mr-1.5 ml-1 w-[212px] px-1.5 placeholder:text-[#808080] ${field}`}
      />
      <CaretButton label="Find options" />
    </div>
  );
}

function ScrollColumn() {
  return (
    <div className="flex w-[34px] shrink-0 flex-col bg-[repeating-conic-gradient(#d4d0c8_0_25%,#ffffff_0_50%)] bg-[size:4px_4px]">
      <button aria-label="Scroll up" className={`flex h-[34px] items-center justify-center ${raised}`}>
        <svg width="16" height="10" viewBox="0 0 16 10" aria-hidden="true">
          <path d="M8 0l8 9H0z" />
        </svg>
      </button>
      <div className={`h-8 ${raised}`} />
      <button aria-label="Scroll down" className={`mt-auto flex h-[34px] items-center justify-center ${raised}`}>
        <svg width="16" height="10" viewBox="0 0 16 10" aria-hidden="true">
          <path d="M0 0h16L8 9z" />
        </svg>
      </button>
    </div>
  );
}

function PdfPage() {
  return (
    <article className="min-w-0 flex-1 overflow-hidden bg-white font-['Liberation_Serif',serif] text-black">
      <div className="mx-auto w-[1082px] pt-[121px] whitespace-nowrap">
        <p className="text-[27px] leading-[30px] italic">Theory in Action, Vol. 4, No.3, July 2011 (© 2011)</p>
        <p className="text-[27px] leading-[30px]">DOI:10.3798/tia.1937-0237.11025</p>
        <h1 className="mt-[54px] text-center text-[40px] leading-[46px] font-bold">
          Changing Our Perception: Using Critical Literacy to Empower
          <br />
          the Marginalized
        </h1>
        <p className="mt-[46px] text-center text-[40px] leading-[46px]">
          Limor Pinhasi-Vittorio<sup className="text-[26px]">1</sup>
        </p>
        <div className="mt-[46px] pl-12 text-[39px] leading-[46px]">
          {bodyLines.map((line) => (
            <p key={line} className="whitespace-normal [text-align-last:justify]">
              {line}
            </p>
          ))}
        </div>
      </div>
    </article>
  );
}

function PdfViewer() {
  return (
    <main className="flex min-w-0 flex-1 flex-col border-r-3 border-b-2 border-r-[#2b2b2b] border-b-[#34479a]">
      <div className="flex h-[46px] shrink-0 items-start justify-center border-t-2 border-b-2 border-t-[#9a9ca6] border-b-[#5c5c5e] bg-linear-to-b from-[#d5d7d7] to-[#f1f1f3]">
        <div className="flex h-10 w-[630px] items-center justify-center overflow-hidden border-x-2 border-[#8f9092] bg-[#efefef] text-[22px] whitespace-nowrap text-[#2d2d35]">
          Changing Our Perception: Using Critical Literacy to Empower
        </div>
      </div>
      <ViewerToolbar />
      <div className="flex min-h-0 flex-1 bg-[#6a686a]">
        <div className="flex w-[97px] shrink-0 flex-col items-start bg-[#666666] pt-8 pb-9 pl-6">
          <IconButton label="Pages">
            <PagesIcon />
          </IconButton>
          <IconButton label="Search document" className="mt-16">
            <BinocularsIcon />
          </IconButton>
          <IconButton label="Help" className="mt-[60px]">
            <HelpIcon />
          </IconButton>
          <IconButton label="Attachments" className="mt-auto">
            <PaperclipIcon />
          </IconButton>
          <IconButton label="Comments" className="mt-[60px]">
            <CommentsIcon />
          </IconButton>
        </div>
        <div className="flex min-w-0 flex-1 border-t-9 border-[#4c4a4c]">
          <PdfPage />
          <div className="w-2.5 shrink-0" />
        </div>
        <ScrollColumn />
      </div>
    </main>
  );
}

export default function App() {
  return (
    <div className={`flex h-screen flex-col overflow-hidden bg-[#d4d0c8] text-black ${uiFont}`}>
      <div className="flex h-[38px] shrink-0 items-center gap-1 bg-linear-to-r from-[#0f2a72] to-[#a6caf0] pl-1 text-[23px] font-bold whitespace-nowrap text-white">
        <IeLogo />
        EBSCOhost Discovery Service: Changing Our Perception: Using Critical Literacy to Empower the Ma - Windows Internet
        Explorer
      </div>
      <AddressBar />
      <MenuBar />
      <PartnerToolbar />
      <TabRow />
      <div className="flex min-h-0 flex-1 flex-col border-t-4 border-l-5 border-[#4b4b49]">
        <SiteHeader />
        <div className="flex min-h-0 flex-1">
          <SideBar />
          <PdfViewer />
          <div className="w-2 shrink-0 bg-white" />
        </div>
        <div className="flex h-[34px] shrink-0 border-t-2 border-b-2 border-t-white border-b-[#55534f]">
          <button aria-label="Scroll left" className={`flex w-[34px] items-center justify-center ${raised}`}>
            <svg width="10" height="16" viewBox="0 0 10 16" aria-hidden="true">
              <path d="M9 0v16L0 8z" />
            </svg>
          </button>
          <div className="flex-1 border-t-2 border-l-2 border-white bg-[#d4d0c8]" />
        </div>
        <div className="h-1 shrink-0 bg-[#d4d0c8]" />
      </div>
    </div>
  );
}
